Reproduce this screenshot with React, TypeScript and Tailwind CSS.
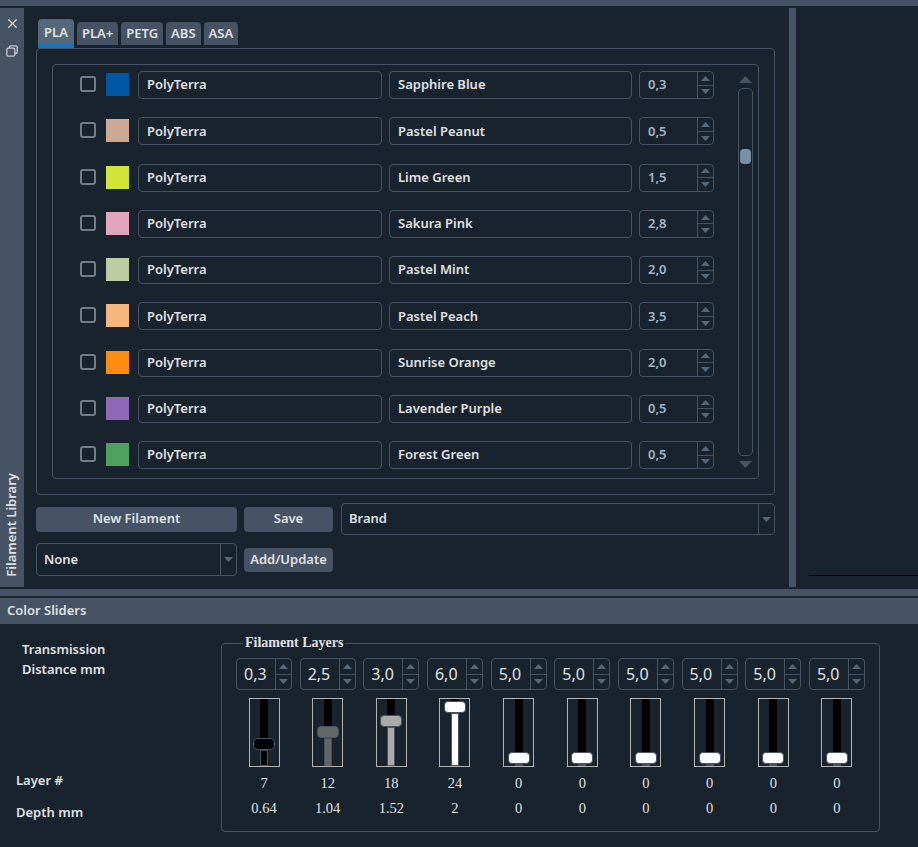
import React from 'react';
import { X } from 'lucide-react';

const filaments = [
  { color: '#0058a3', name: 'Sapphire Blue', td: '0,3' },
  { color: '#cba995', name: 'Pastel Peanut', td: '0,5' },
  { color: '#d2e63a', name: 'Lime Green', td: '1,5' },
  { color: '#e3a5bd', name: 'Sakura Pink', td: '2,8' },
  { color: '#bfcba2', name: 'Pastel Mint', td: '2,0' },
  { color: '#f5b77c', name: 'Pastel Peach', td: '3,5' },
  { color: '#ff8c0f', name: 'Sunrise Orange', td: '2,0' },
  { color: '#8f68b8', name: 'Lavender Purple', td: '0,5' },
  { color: '#50a160', name: 'Forest Green', td: '0,5' },
];

const tabs = ['PLA', 'PLA+', 'PETG', 'ABS', 'ASA'];

const layers = [
  { td: '0,3', top: 39, color: '#000000', layer: '7', depth: '0.64' },
  { td: '2,5', top: 27, color: '#666666', layer: '12', depth: '1.04' },
  { td: '3,0', top: 16, color: '#aaaaaa', layer: '18', depth: '1.52' },
  { td: '6,0', top: 2, color: '#ffffff', layer: '24', depth: '2' },
  { td: '5,0', top: 53, color: '#ffffff', layer: '0', depth: '0' },
  { td: '5,0', top: 53, color: '#ffffff', layer: '0', depth: '0' },
  { td: '5,0', top: 53, color: '#ffffff', layer: '0', depth: '0' },
  { td: '5,0', top: 53, color: '#ffffff', layer: '0', depth: '0' },
  { td: '5,0', top: 53, color: '#ffffff', layer: '0', depth: '0' },
  { td: '5,0', top: 53, color: '#ffffff', layer: '0', depth: '0' },
];

const Arrow: React.FC<{ up?: boolean; w?: number; h?: number; fill?: string }> = ({ up, w = 9, h = 5, fill = '#54687a' }) => (
  <svg width={w} height={h} viewBox="0 0 10 6" preserveAspectRatio="none" className="block">
    <path d={up ? 'M5 0L10 6H0Z' : 'M0 0H10L5 6Z'} fill={fill} />
  </svg>
);

const SpinButtons: React.FC = () => (
  <div className="flex w-[16px] shrink-0 flex-col border-l border-[#455364]">
    <div className="flex flex-1 items-center justify-center border-b border-[#455364]">
      <Arrow up />
    </div>
    <div className="flex flex-1 items-center justify-center">
      <Arrow />
    </div>
  </div>
);

const Combo: React.FC<{ label: string; className: string }> = ({ label, className }) => (
  <div className={`flex rounded-[4px] border border-[#455364] ${className}`}>
    <div className="flex flex-1 items-center pl-[7px] text-[13px] font-semibold text-[#e0e1e3]">{label}</div>
    <div className="flex w-[16px] items-center justify-center border-l border-[#455364]">
      <Arrow />
    </div>
  </div>
);

const Button: React.FC<{ label: string; className: string }> = ({ label, className }) => (
  <button className={`flex items-center justify-center rounded-[4px] bg-[#455364] text-[13px] font-semibold text-[#e0e1e3] ${className}`}>
    {label}
  </button>
);

const FilamentRow: React.FC<{ color: string; name: string; td: string }> = ({ color, name, td }) => (
  <div className="flex h-[46.25px] items-start">
    <div className="mt-[5px] h-[16px] w-[16px] rounded-[3px] border-2 border-[#737d88]" />
    <div className="ml-[10px] mt-[2px] h-[23px] w-[23px]" style={{ backgroundColor: color }} />
    <div className="ml-[9px] flex h-[28px] w-[244px] items-center rounded-[4px] border border-[#455364] pl-[8px] text-[13px] font-semibold text-[#e0e1e3]">
      PolyTerra
    </div>
    <div className="ml-[7px] flex h-[28px] w-[243px] items-center rounded-[4px] border border-[#455364] pl-[8px] text-[13px] font-semibold text-[#e0e1e3]">
      {name}
    </div>
    <div className="ml-[7px] flex h-[28px] w-[75px] rounded-[4px] border border-[#455364]">
      <div className="flex flex-1 items-center pl-[8px] text-[13px] font-semibold text-[#a3b5c8]">{td}</div>
      <SpinButtons />
    </div>
  </div>
);

const LayerSlider: React.FC<{ top: number; color: string }> = ({ top, color }) => (
  <div className="flex h-[69px] w-[31px] flex-col items-center border border-[#b4b4b4]">
    <div className="w-[8px] bg-black" style={{ height: top }} />
    <div
      className="h-[12px] w-[22px] shrink-0 rounded-[4px] border border-[#455364]"
      style={{ backgroundColor: color }}
    />
    <div className="w-[8px] flex-1 border border-[#455364]" style={{ backgroundColor: color }} />
  </div>
);

const LayerColumn: React.FC<(typeof layers)[number]> = ({ td, top, color, layer, depth }) => (
  <div className="flex w-[56px] flex-col items-center">
    <div className="flex h-[32px] w-full rounded-[4px] border border-[#455364]">
      <div className="flex flex-1 items-center pl-[7px] text-[16px] text-[#e0e1e3]">{td}</div>
      <SpinButtons />
    </div>
    <div className="mt-[8px]">
      <LayerSlider top={top} color={color} />
    </div>
    <div className="mt-[6px] h-[20px] font-['Liberation_Serif',serif] text-[14.5px] leading-[20px] text-[#e0e1e3]">{layer}</div>
    <div className="mt-[5px] h-[20px] font-['Liberation_Serif',serif] text-[14.5px] leading-[20px] text-[#e0e1e3]">{depth}</div>
  </div>
);

const App: React.FC = () => {
  return (
    <div className="flex h-[847px] w-[918px] flex-col overflow-hidden bg-[#19232d] font-['Noto_Sans',sans-serif]">
      <div className="h-[6px] shrink-0 bg-[#455364]" />

      <div className="mt-[2px] flex h-[579px] shrink-0">
        {/* dock title bar */}
        <div className="flex w-[24px] shrink-0 flex-col items-center justify-between bg-[#455364] pb-[10px] pt-[8px]">
          <div className="flex flex-col items-center gap-[14px] text-[#e0e1e3]">
            <X size={15} strokeWidth={2} />
            <svg width="12" height="12" viewBox="0 0 12 12" fill="none" stroke="#c8ccd0" strokeWidth="1.3">
              <rect x="0.8" y="3.2" width="8" height="8" rx="1.5" />
              <path d="M3.4 3V2.2A1.5 1.5 0 0 1 4.9 .8H9.7A1.5 1.5 0 0 1 11.2 2.2V7A1.5 1.5 0 0 1 9.7 8.5H9" />
            </svg>
          </div>
          <div className="rotate-180 text-[13px] font-semibold text-[#e0e1e3] [writing-mode:vertical-rl]">Filament Library</div>
        </div>

        {/* library */}
        <div className="w-[765px] shrink-0 pl-[12px] pt-[11px]">
          <div className="flex h-[29px] pl-[2px]">
            {tabs.map((t, i) =>
              i === 0 ? (
                <div key={t} className="mr-[3px] flex h-[29px] w-[36px] items-start justify-center rounded-t-[4px] border-b-4 border-[#1a72bb] bg-[#54687a] pt-[4px] text-[13px] font-semibold leading-[18px] text-[#e0e1e3]">
                  {t}
                </div>
              ) : (
                <div key={t} className="mr-[3px] mt-[3px] flex h-[23px] items-center justify-center rounded-t-[4px] bg-[#455364] px-[5px] text-[13px] font-semibold text-[#e0e1e3]">
                  {t}
                </div>
              ),
            )}
          </div>

          <div className="h-[447px] w-[739px] rounded-[4px] border border-[#455364] p-[15px]">
            <div className="flex h-[415px] rounded-[4px] border border-[#455364]">
              <div className="pl-[27px] pt-[6px]">
                {filaments.map((f) => (
                  <FilamentRow key={f.name} {...f} />
                ))}
              </div>
              <div className="ml-[24px] flex w-[15px] flex-col items-center pt-[11px]">
                <Arrow up w={13} h={7} fill="#455364" />
                <div className="mt-[5px] flex h-[368px] w-[15px] justify-center rounded-[5px] border border-[#455364] pt-[60px]">
                  <div className="h-[15px] w-[11px] rounded-[4px] bg-[#7890a8]" />
                </div>
                <div className="mt-[5px]">
                  <Arrow w={13} h={7} fill="#455364" />
                </div>
              </div>
            </div>
          </div>

          <div className="mt-[8px] flex items-center">
            <Button label="New Filament" className="h-[25px] w-[201px]" />
            <Button label="Save" className="ml-[7px] h-[25px] w-[89px]" />
            <Combo label="Brand" className="ml-[8px] h-[32px] w-[434px]" />
          </div>
          <div className="mt-[8px] flex items-center">
            <Combo label="None" className="h-[33px] w-[201px]" />
            <Button label="Add/Update" className="ml-[7px] h-[24px] w-[89px]" />
          </div>
        </div>

        {/* splitter */}
        <div className="w-[7px] shrink-0 bg-[#455364]" />

        <div className="flex flex-1 flex-col justify-end pb-[11px] pl-[13px]">
          <div className="h-px bg-black" />
        </div>
      </div>

      <div className="mt-[2px] h-[7px] shrink-0 bg-[#455364]" />

      <div className="mt-[2px] flex h-[26px] shrink-0 items-center bg-[#455364] pl-[7px] text-[13px] font-semibold text-[#e0e1e3]">
        Color Sliders
      </div>

      <div className="flex flex-1">
        <div className="w-[221px] shrink-0 text-[13px] font-semibold leading-[20px] text-[#e0e1e3]">
          <div className="pl-[22px] pt-[15px]">Transmission</div>
          <div className="pl-[22px]">Distance mm</div>
          <div className="mt-[91px] pl-[16px]">Layer #</div>
          <div className="mt-[12px] pl-[16px]">Depth mm</div>
        </div>

        <fieldset className="mt-[10px] h-[198px] w-[659px] rounded-[4px] border border-[#455364] px-[14px]">
          <legend className="ml-[7px] h-[18px] px-[2px] font-['Liberation_Serif',serif] text-[14px] font-bold leading-[18px] text-[#e0e1e3]">
            Filament Layers
          </legend>
          <div className="flex justify-between pt-[6px]">
            {layers.map((l, i) => (
              <LayerColumn key={i} {...l} />
            ))}
          </div>
        </fieldset>
      </div>
    </div>
  );
};

export default App;
